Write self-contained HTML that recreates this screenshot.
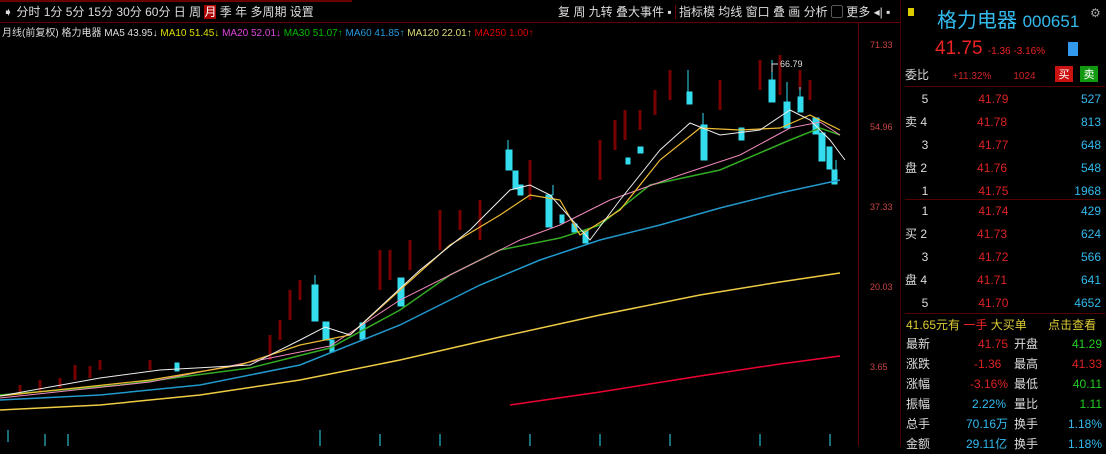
<!DOCTYPE html>
<html><head><meta charset="utf-8"><style>
body{margin:0;width:1106px;height:446px;background:#000;overflow:hidden;font-family:"Liberation Sans","Noto Sans CJK SC",sans-serif;position:relative}
.a{position:absolute;white-space:nowrap}
.tb{top:3px;font-size:12px;color:#ddd}
.rp{font-size:12px}
</style></head><body>
<div class="a" style="left:0;top:0;width:352px;height:2px;background:#600"></div>
<div class="a" style="left:0;top:22px;width:900px;height:1px;background:#600"></div>
<div class="a" style="left:858px;top:22px;width:1px;height:424px;background:#600"></div>
<div class="a" style="left:900px;top:0;width:1px;height:446px;background:#400"></div>
<div class="a tb" style="left:3px">➧ 分时 1分 5分 15分 30分 60分 日 周 <span style="background:#a00;color:#fff">月</span> 季 年 多周期 设置</div>
<div class="a tb" style="left:558px">复 周 九转 叠大事件 ▪ <span style="border-left:1px solid #600;padding-left:3px">指标模 均线 窗口 叠 画 分析 ▢ 更多 ◂| ▪</span></div>
<div class="a" style="left:2px;top:24px;font-size:10px;color:#ddd">月线(前复权) 格力电器 MA5 43.95↓ <span style="color:#dd0">MA10 51.45↓</span> <span style="color:#d4d">MA20 52.01↓</span> <span style="color:#0b0">MA30 51.07↑</span> <span style="color:#29d">MA60 41.85↑</span> <span style="color:#dd7">MA120 22.01↑</span> <span style="color:#d00">MA250 1.00↑</span></div>
<div class="a" style="left:870px;top:40px;font-size:9px;color:#c44">71.33</div>
<div class="a" style="left:870px;top:122px;font-size:9px;color:#c44">54.96</div>
<div class="a" style="left:870px;top:202px;font-size:9px;color:#c44">37.33</div>
<div class="a" style="left:870px;top:282px;font-size:9px;color:#c44">20.03</div>
<div class="a" style="left:870px;top:362px;font-size:9px;color:#c44">3.65</div>
<svg class="a" style="left:0;top:0" width="858" height="446">
<g stroke="#a00" stroke-width="3" opacity=".7">
<path d="M20 395v-10M40 392v-12M60 388v-10M75 380v-15M90 378v-12M100 370v-10M150 370v-10M270 360v-25M280 340v-20M290 320v-30M300 300v-20M380 290v-40M390 280v-30M410 270v-30M440 250v-40M460 230v-20M480 240v-40M530 200v-40M600 180v-40M615 150v-30M625 140v-30M640 130v-20M655 115v-25M670 100v-30M720 110v-30M760 90v-30M780 95v-40M800 90v-20M810 100v-20"/>
</g>
<g fill="#3de" stroke="#3de">
<rect x="312" y="285" width="6" height="36"/><rect x="323" y="322" width="6" height="18"/><rect x="330" y="340" width="4" height="12"/><rect x="360" y="323" width="5" height="16"/>
<rect x="398" y="278" width="6" height="28"/><rect x="506" y="150" width="6" height="20"/><rect x="513" y="171" width="5" height="18"/><rect x="518" y="185" width="5" height="10"/>
<rect x="546" y="195" width="6" height="32"/><rect x="560" y="215" width="4" height="8"/><rect x="572" y="224" width="5" height="8"/><rect x="583" y="231" width="5" height="12"/>
<rect x="626" y="158" width="4" height="6"/><rect x="638" y="147" width="5" height="6"/><rect x="687" y="92" width="5" height="12"/><rect x="701" y="125" width="6" height="35"/>
<rect x="739" y="128" width="5" height="12"/><rect x="769" y="80" width="6" height="22"/><rect x="784" y="102" width="6" height="26"/><rect x="798" y="97" width="5" height="15"/>
<rect x="813" y="118" width="6" height="16"/><rect x="819" y="133" width="6" height="28"/><rect x="827" y="147" width="5" height="22"/><rect x="832" y="170" width="5" height="14"/>
<rect x="175" y="363" width="4" height="8"/>
</g>
<g stroke="#3de" stroke-width="1"><path d="M315 285v-10M508 150v-10M553 195v-10M688 92v-22M703 125v-12M772 80v-20M787 102v-20M800 97v-10M836 170v-10"/></g>
<polyline fill="none" stroke="#e03" stroke-width="1.5" points="510,405 600,392 700,376 780,364 840,356"/>
<polyline fill="none" stroke="#ec4" stroke-width="1.5" points="0,410 100,405 200,395 300,380 400,360 500,337 600,315 700,295 780,282 840,273"/>
<polyline fill="none" stroke="#29c" stroke-width="1.5" points="0,400 100,395 200,385 300,365 400,325 480,285 540,260 600,240 660,225 720,208 780,193 840,180"/>
<polyline fill="none" stroke="#3a2" stroke-width="1.5" points="0,395 120,385 250,368 330,348 400,310 450,275 500,250 560,238 600,225 650,185 720,170 790,140 820,128 840,135"/>
<polyline fill="none" stroke="#e8b" stroke-width="1" points="0,398 150,382 250,362 330,346 400,300 460,270 520,240 560,225 610,200 680,175 740,155 790,128 820,122 840,135"/>
<polyline fill="none" stroke="#eb3" stroke-width="1.2" points="0,396 150,380 240,365 300,345 350,335 400,290 450,245 500,215 530,195 560,200 580,235 620,210 660,160 700,128 740,130 780,128 810,115 840,130"/>
<polyline fill="none" stroke="#eee" stroke-width="1" points="0,396 100,378 160,370 250,365 300,340 325,327 350,335 420,270 470,230 510,190 530,185 550,195 590,240 620,200 660,150 690,123 720,135 760,130 790,110 810,120 830,140 845,160"/>
<path d="M772 72v-8h6" stroke="#ddd" fill="none"/>
<text x="780" y="67" font-size="9" fill="#ddd">66.79</text>
<g stroke="#3de"><path d="M8 430v12M45 434v12M68 434v12M320 430v16M380 434v12M440 434v12M530 434v12M600 434v12M670 434v12M760 434v12M830 434v12"/></g>
</svg>
<div class="a" style="left:908px;top:8px;width:6px;height:8px;background:#dc0"></div>
<div class="a" style="left:937px;top:4px;font-size:20px;color:#3be">格力电器 <span style="font-size:17px">000651</span></div>
<div class="a" style="left:1090px;top:6px;font-size:12px;color:#aaa">⚙</div>
<div class="a" style="left:935px;top:38px;font-size:19px;color:#e22">41.75 <span style="font-size:10px">-1.36 -3.16%</span></div>
<div class="a" style="left:1068px;top:42px;width:10px;height:14px;background:#39e"></div>
<div class="a rp" style="left:905px;top:66px;color:#ddd">委比 <span style="color:#c22;font-size:10px;margin-left:20px">+11.32%</span><span style="color:#c22;font-size:10px;margin-left:22px">1024</span></div>
<div class="a" style="left:1055px;top:66px;width:18px;height:16px;background:#c11;color:#fff;font-size:11px;text-align:center">买</div>
<div class="a" style="left:1080px;top:66px;width:18px;height:16px;background:#191;color:#fff;font-size:11px;text-align:center">卖</div>
<div class="a" style="left:905px;top:86px;width:200px;height:1px;background:#500"></div>
<div class="a" style="left:905px;top:199px;width:200px;height:1px;background:#500"></div>
<div class="a" style="left:905px;top:313px;width:200px;height:1px;background:#500"></div>
<div class="a rp" style="left:905px;top:88px;line-height:23px;color:#ddd;width:196px">
<div>&nbsp;&nbsp;&nbsp;&nbsp;&nbsp;5<span style="color:#d22;margin-left:50px">41.79</span><span style="color:#3be;float:right">527</span></div>
<div>卖 4<span style="color:#d22;margin-left:50px">41.78</span><span style="color:#3be;float:right">813</span></div>
<div>&nbsp;&nbsp;&nbsp;&nbsp;&nbsp;3<span style="color:#d22;margin-left:50px">41.77</span><span style="color:#3be;float:right">648</span></div>
<div>盘 2<span style="color:#d22;margin-left:50px">41.76</span><span style="color:#3be;float:right">548</span></div>
<div>&nbsp;&nbsp;&nbsp;&nbsp;&nbsp;1<span style="color:#d22;margin-left:50px">41.75</span><span style="color:#3be;float:right">1968</span></div>
</div>
<div class="a rp" style="left:905px;top:200px;line-height:23px;color:#ddd;width:196px">
<div>&nbsp;&nbsp;&nbsp;&nbsp;&nbsp;1<span style="color:#d22;margin-left:50px">41.74</span><span style="color:#3be;float:right">429</span></div>
<div>买 2<span style="color:#d22;margin-left:50px">41.73</span><span style="color:#3be;float:right">624</span></div>
<div>&nbsp;&nbsp;&nbsp;&nbsp;&nbsp;3<span style="color:#d22;margin-left:50px">41.72</span><span style="color:#3be;float:right">566</span></div>
<div>盘 4<span style="color:#d22;margin-left:50px">41.71</span><span style="color:#3be;float:right">641</span></div>
<div>&nbsp;&nbsp;&nbsp;&nbsp;&nbsp;5<span style="color:#d22;margin-left:50px">41.70</span><span style="color:#3be;float:right">4652</span></div>
</div>
<div class="a rp" style="left:906px;top:316px;color:#dc3">41.65元有 <span style="color:#e22">一手</span> 大买单 <span style="margin-left:18px">点击查看</span></div>
<div class="a rp" style="left:906px;top:334px;line-height:20px;color:#ddd;width:196px">
<div>最新<span style="color:#d22;position:absolute;left:72px">41.75</span><span style="position:absolute;left:108px">开盘</span><span style="color:#2c2;float:right">41.29</span></div>
<div>涨跌<span style="color:#d22;position:absolute;left:68px">-1.36</span><span style="position:absolute;left:108px">最高</span><span style="color:#d22;float:right">41.33</span></div>
<div>涨幅<span style="color:#d22;position:absolute;left:64px">-3.16%</span><span style="position:absolute;left:108px">最低</span><span style="color:#2c2;float:right">40.11</span></div>
<div>振幅<span style="color:#3be;position:absolute;left:66px">2.22%</span><span style="position:absolute;left:108px">量比</span><span style="color:#2c2;float:right">1.11</span></div>
<div>总手<span style="color:#3be;position:absolute;left:60px">70.16万</span><span style="position:absolute;left:108px">换手</span><span style="color:#3be;float:right">1.18%</span></div>
<div>金额<span style="color:#3be;position:absolute;left:60px">29.11亿</span><span style="position:absolute;left:108px">换手</span><span style="color:#3be;float:right">1.18%</span></div>
</div>
</body></html>
